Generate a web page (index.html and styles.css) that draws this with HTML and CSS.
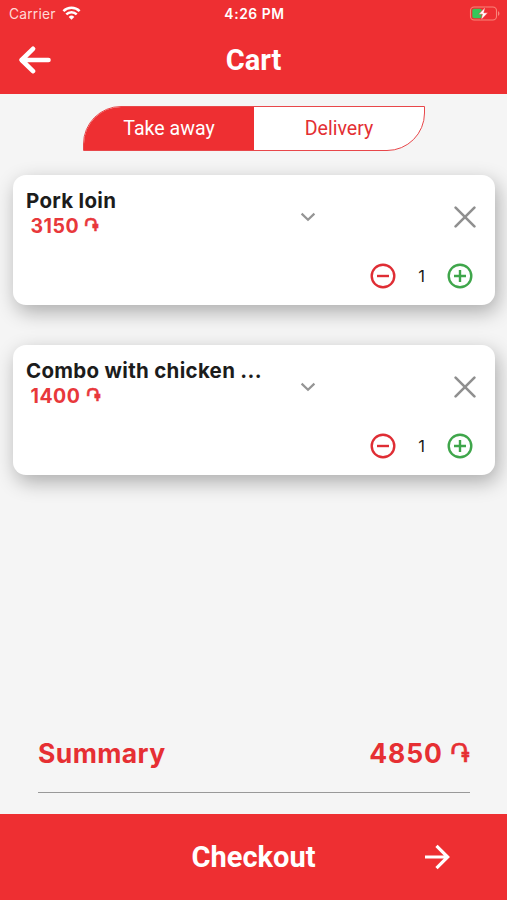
FILE: index.html
```html
<!DOCTYPE html>
<html lang="en">
<head>
  <meta charset="UTF-8">
  <meta name="viewport" content="width=device-width, initial-scale=1.0">
  <title>Cart</title>
  <link rel="stylesheet" href="styles.css">
</head>
<body>
  <header class="header">
    <div class="status-bar">
      <div class="carrier">
        <span>Carrier</span>
        <svg class="wifi" viewBox="0 0 18 14" fill="none" stroke="#fff" stroke-width="2.5">
          <path d="M0.9 5.2a11.5 11.5 0 0 1 16.2 0"/>
          <path d="M3.8 8.4a7.3 7.3 0 0 1 10.4 0"/>
          <path d="M9 13.7L6.2 10.9a4 4 0 0 1 5.6 0z" fill="#fff" stroke="none"/>
        </svg>
      </div>
      <span class="time">4:26 PM</span>
      <svg class="battery" viewBox="0 0 31 15">
        <rect x="1.5" y="1" width="26" height="13" rx="3.6" fill="none" stroke="#f8857b" stroke-width="1.1"/>
        <path d="M29 5.2c1.9.6 1.9 4 0 4.6z" fill="#f8857b"/>
        <rect x="3.3" y="2.8" width="9.5" height="9.4" rx="1.8" fill="#35c759"/>
        <path d="M16.3 1.3L9.6 8.2h3.8l-1.4 5.7L18.8 6.8h-4z" fill="#fff" stroke="#ee2f32" stroke-width=".5"/>
      </svg>
    </div>
    <div class="title-bar">
      <svg class="back" viewBox="0 0 32 28" fill="none" stroke="#fff" stroke-width="4.6" stroke-linecap="round" stroke-linejoin="round">
        <path d="M29.5 14H3M14 2.8L2.6 14 14 25.2"/>
      </svg>
      <h1>Cart</h1>
    </div>
  </header>

  <main class="content">
    <div class="tabs">
      <div class="tab active">Take away</div>
      <div class="tab">Delivery</div>
    </div>

    <div class="card">
      <div class="card-top">
        <div class="info">
          <div class="name">Pork loin</div>
          <div class="price">3150 <span class="dram">֏</span></div>
        </div>
        <svg class="chevron" viewBox="0 0 16 10"><path d="M1.6 1.6L8 7.8l6.4-6.2"/></svg>
        <svg class="remove" viewBox="0 0 22 22"><path d="M1.6 1.6l18.8 18.8M20.4 1.6L1.6 20.4"/></svg>
      </div>
      <div class="counter">
        <svg class="minus" viewBox="0 0 26 26"><circle cx="13" cy="13" r="11.3"/><path d="M7 13h12"/></svg>
        <span>1</span>
        <svg class="plus" viewBox="0 0 26 26"><circle cx="13" cy="13" r="11.3"/><path d="M7 13h12M13 7v12"/></svg>
      </div>
    </div>

    <div class="card">
      <div class="card-top">
        <div class="info">
          <div class="name">Combo with chicken ...</div>
          <div class="price">1400 <span class="dram">֏</span></div>
        </div>
        <svg class="chevron" viewBox="0 0 16 10"><path d="M1.6 1.6L8 7.8l6.4-6.2"/></svg>
        <svg class="remove" viewBox="0 0 22 22"><path d="M1.6 1.6l18.8 18.8M20.4 1.6L1.6 20.4"/></svg>
      </div>
      <div class="counter">
        <svg class="minus" viewBox="0 0 26 26"><circle cx="13" cy="13" r="11.3"/><path d="M7 13h12"/></svg>
        <span>1</span>
        <svg class="plus" viewBox="0 0 26 26"><circle cx="13" cy="13" r="11.3"/><path d="M7 13h12M13 7v12"/></svg>
      </div>
    </div>
  </main>

  <div class="summary">
    <span class="label">Summary</span>
    <span class="total">4850 <span class="dram">֏</span></span>
  </div>

  <footer class="checkout">
    <span>Checkout</span>
    <svg class="next" viewBox="0 0 26 26" fill="none" stroke="#fff" stroke-width="3.2">
      <path d="M1 13h23M12.5 1.8L23.7 13 12.5 24.2"/>
    </svg>
  </footer>
</body>
</html>
```

FILE: styles.css
```css
* {
  box-sizing: border-box;
}

body {
  margin: 0;
  height: 900px;
  display: flex;
  flex-direction: column;
  background-color: #f5f5f5;
  font-family: Inter, "Noto Sans", sans-serif;
  color: #1c1c1c;
}

svg {
  display: block;
}

.header {
  height: 94px;
  background-color: #ee2f32;
  color: #fff;
}

.status-bar {
  height: 27px;
  padding: 0 7px 0 9px;
  display: grid;
  grid-template-columns: 1fr auto 1fr;
  align-items: center;
  font-size: 13.8px;
}

.carrier {
  display: flex;
  align-items: center;
  gap: 6px;
  color: #ffd9d6;
  letter-spacing: 0.2px;
}

.wifi {
  width: 19px;
  height: 14px;
  margin-top: -2px;
}

.time {
  font-size: 13.8px;
  font-weight: 600;
  letter-spacing: 0.6px;
}

.battery {
  width: 31px;
  height: 15px;
  justify-self: end;
  margin-top: -1px;
}

.title-bar {
  height: 66px;
  padding: 0 19px;
  display: grid;
  grid-template-columns: 1fr auto 1fr;
  align-items: center;
}

.back {
  width: 32px;
  height: 28px;
}

.title-bar h1 {
  margin: 0;
  font: bold 29px Roboto, sans-serif;
}

.content {
  flex: 1;
  padding: 12px 12px 0 13px;
}

.tabs {
  width: 342px;
  height: 45px;
  margin: 0 0 24px 70px;
  display: flex;
  overflow: hidden;
  border: 1.5px solid #e8474a;
  border-radius: 38px 0 38px 0;
  background-color: #fff;
}

.tab {
  flex: 1;
  display: flex;
  align-items: center;
  justify-content: center;
  font: 19.6px Roboto, sans-serif;
  color: #e32f33;
}

.tab.active {
  background-color: #ee2f32;
  color: #fff;
}

.card {
  height: 130px;
  margin-bottom: 40px;
  padding: 12px 19px 0 13px;
  background-color: #fff;
  border-radius: 13px;
  box-shadow: 3px 7px 20px rgba(0, 0, 0, 0.3);
}

.card-top {
  height: 60px;
  display: grid;
  grid-template-columns: 274px 1fr 22px;
  align-items: center;
}

.info {
  height: 100%;
}

.name {
  font-size: 20.5px;
  line-height: 27px;
  font-weight: 650;
  letter-spacing: 0.3px;
  white-space: nowrap;
}

.price {
  padding-left: 4.5px;
  font-size: 19.5px;
  line-height: 25px;
  font-weight: 700;
  letter-spacing: 0.5px;
  color: #e8383b;
}

/* regular weight keeps the two bars of the sign apart */
.dram {
  font-family: "DejaVu Sans", "Noto Sans", sans-serif;
  font-weight: 400;
  letter-spacing: 0;
  -webkit-text-stroke: 0.5px currentColor;
}

.chevron {
  width: 16px;
  height: 10px;
  fill: none;
  stroke: #959595;
  stroke-width: 2.2;
}

.remove {
  width: 22px;
  height: 22px;
  fill: none;
  stroke: #909090;
  stroke-width: 2.6;
  stroke-linecap: round;
}

.counter {
  display: flex;
  align-items: center;
  justify-content: flex-end;
  margin-top: 16px;
  padding-right: 3px;
  font-size: 16.5px;
}

.counter span {
  width: 51px;
  text-align: center;
}

.counter svg {
  width: 26px;
  height: 26px;
  fill: none;
  stroke-width: 2.4;
}

.minus {
  stroke: #df2d34;
}

.plus {
  stroke: #3fa64b;
}

.summary {
  height: 65px;
  margin: 0 37px 21px 38px;
  display: flex;
  justify-content: space-between;
  align-items: flex-start;
  border-bottom: 1px solid #999;
  font-size: 26.5px;
  line-height: 50px;
  font-weight: 700;
  letter-spacing: 0.4px;
  color: #e62f33;
}

.total {
  letter-spacing: 0.9px;
}

.checkout {
  height: 86px;
  padding: 0 57px;
  display: grid;
  grid-template-columns: 1fr auto 1fr;
  align-items: center;
  background-color: #ee2f32;
  color: #fff;
  font: bold 29px Roboto, sans-serif;
}

.checkout span {
  grid-column: 2;
}

.next {
  width: 26px;
  height: 26px;
  justify-self: end;
}
```
